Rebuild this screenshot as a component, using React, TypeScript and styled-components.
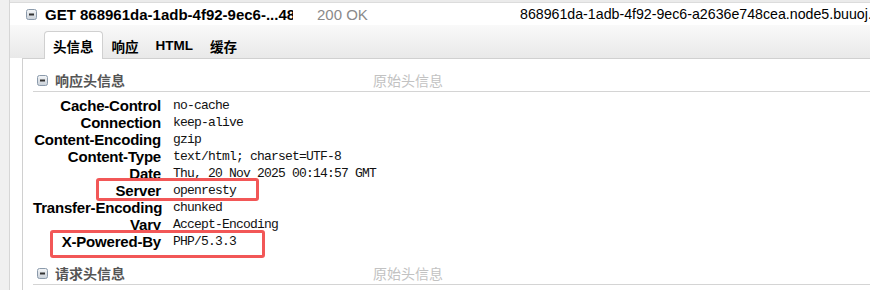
import React from "react";
import styled, { createGlobalStyle } from "styled-components";

const Global = createGlobalStyle`
  html, body { margin: 0; padding: 0; background: #fff; }
  body { width: 870px; height: 290px; overflow: hidden; font-family: "Liberation Sans", Arial, sans-serif; }
`;

const Page = styled.div`
  display: flex;
  width: 870px;
  height: 290px;
  overflow: hidden;
  background: #fff;
`;

const LeftStrip = styled.div`
  width: 9px;
  flex: none;
  background: #f0f0f0;
  border-right: 1px solid #d6d6d6;
`;

const Main = styled.div`
  flex: 1;
  min-width: 0;
  display: flex;
  flex-direction: column;
`;

const TopEdge = styled.div`
  height: 3px;
  background: #ebebeb;
  border-bottom: 1px solid #dcdcdc;
  box-sizing: border-box;
`;

const RequestRow = styled.div`
  height: 22px;
  display: flex;
  align-items: center;
  background: #fff;
  white-space: nowrap;
`;

const ToggleCell = styled.div`
  width: 35px;
  flex: none;
  display: flex;
  justify-content: flex-end;
  padding-right: 8px;
  box-sizing: border-box;
`;

const UrlCell = styled.div`
  width: 248px;
  flex: none;
  overflow: hidden;
  font-weight: bold;
  font-size: 15px;
  color: #000;
`;

const StatusCell = styled.div`
  width: 227px;
  flex: none;
  padding-left: 24px;
  box-sizing: border-box;
  font-size: 15px;
  color: #8a8a8a;
`;

const HostCell = styled.div`
  flex: 1;
  min-width: 0;
  overflow: hidden;
  font-size: 14.2px;
  color: #000;
`;

const TabBar = styled.div`
  height: 33px;
  display: flex;
  align-items: flex-end;
  padding-left: 34px;
  background: linear-gradient(#f9f9f9, #e9e9e9);
  position: relative;
`;

const Tab = styled.div<{ $active?: boolean }>`
  height: 28px;
  display: flex;
  align-items: center;
  padding: 0 ${(p) => (p.$active ? "8px" : "7px")};
  font-weight: bold;
  font-size: 13.5px;
  color: #000;
  font-family: "Liberation Sans", "Noto Sans CJK SC", sans-serif;
  box-sizing: border-box;
  background: ${(p) => (p.$active ? "#fff" : "transparent")};
  border: 1px solid ${(p) => (p.$active ? "#d0d0d0" : "transparent")};
  border-bottom: none;
  border-radius: 4px 4px 0 0;
  margin-bottom: -1px;
  margin-right: 1px;
  position: relative;
  z-index: 1;
`;

const Panel = styled.div`
  margin-left: 12px;
  border-left: 1px solid #d0d0d0;
  border-top: 1px solid #d0d0d0;
  padding: 10px 0 0 10px;
  flex: 1;
`;

const SectionHeader = styled.div<{ $gap?: number }>`
  height: 22px;
  display: flex;
  align-items: center;
  border-bottom: 1px solid #d4d4d4;
  margin-top: ${(p) => p.$gap ?? 0}px;
`;

const SectionTitle = styled.div`
  width: 336px;
  flex: none;
  display: flex;
  align-items: center;
  gap: 7px;
  padding-left: 4px;
  box-sizing: border-box;
  font-weight: bold;
  font-size: 14px;
  color: #555;
  font-family: "Noto Sans CJK SC", sans-serif;
`;

const RawLink = styled.div`
  padding-left: 4px;
  font-size: 14px;
  color: #c2c2c2;
  font-family: "Noto Sans CJK SC", sans-serif;
`;

const Rows = styled.div`
  position: relative;
  margin-top: 5px;
`;

const Row = styled.div`
  display: grid;
  grid-template-columns: 128px 1fr;
  column-gap: 12px;
  height: 17px;
  align-items: center;
`;

const Label = styled.div`
  text-align: right;
  font-weight: bold;
  font-size: 15px;
  letter-spacing: -0.2px;
  color: #000;
  white-space: nowrap;
`;

const Value = styled.div`
  font-family: "Liberation Mono", "Courier New", monospace;
  font-size: 13px;
  letter-spacing: -0.8px;
  color: #111;
  white-space: nowrap;
`;

const Mark = styled.div<{ $l: number; $t: number; $w: number; $h: number }>`
  position: absolute;
  left: ${(p) => p.$l}px;
  top: ${(p) => p.$t}px;
  width: ${(p) => p.$w}px;
  height: ${(p) => p.$h}px;
  border: 3px solid #f25757;
  border-radius: 3px;
  box-sizing: border-box;
  pointer-events: none;
`;

const MinusIcon = () => (
  <svg width="11" height="11" viewBox="0 0 11 11">
    <defs>
      <linearGradient id="mg" x1="0" y1="0" x2="0" y2="1">
        <stop offset="0" stopColor="#f4f6f8" />
        <stop offset="1" stopColor="#c9d0d8" />
      </linearGradient>
    </defs>
    <rect x="0.5" y="0.5" width="10" height="10" rx="2" fill="url(#mg)" stroke="#8b9aab" />
    <rect x="3" y="4.5" width="5" height="2" fill="#333" />
  </svg>
);

const headers: [string, string][] = [
  ["Cache-Control", "no-cache"],
  ["Connection", "keep-alive"],
  ["Content-Encoding", "gzip"],
  ["Content-Type", "text/html; charset=UTF-8"],
  ["Date", "Thu, 20 Nov 2025 00:14:57 GMT"],
  ["Server", "openresty"],
  ["Transfer-Encoding", "chunked"],
  ["Vary", "Accept-Encoding"],
  ["X-Powered-By", "PHP/5.3.3"],
];

export default function App() {
  return (
    <>
      <Global />
      <Page>
        <LeftStrip />
        <Main>
          <TopEdge />
          <RequestRow>
            <ToggleCell>
              <MinusIcon />
            </ToggleCell>
            <UrlCell>GET 868961da-1adb-4f92-9ec6-...48cea.node5</UrlCell>
            <StatusCell>200 OK</StatusCell>
            <HostCell>868961da-1adb-4f92-9ec6-a2636e748cea.node5.buuoj.cn:81</HostCell>
          </RequestRow>
          <TabBar>
            <Tab $active>头信息</Tab>
            <Tab>响应</Tab>
            <Tab>HTML</Tab>
            <Tab>缓存</Tab>
          </TabBar>
          <Panel>
            <SectionHeader>
              <SectionTitle>
                <MinusIcon />
                响应头信息
              </SectionTitle>
              <RawLink>原始头信息</RawLink>
            </SectionHeader>
            <Rows>
              {headers.map(([k, v]) => (
                <Row key={k}>
                  <Label>{k}</Label>
                  <Value>{v}</Value>
                </Row>
              ))}
              <Mark $l={63} $t={81} $w={163} $h={23} />
              <Mark $l={17} $t={133} $w={215} $h={28} />
            </Rows>
            <SectionHeader $gap={12}>
              <SectionTitle>
                <MinusIcon />
                请求头信息
              </SectionTitle>
              <RawLink>原始头信息</RawLink>
            </SectionHeader>
          </Panel>
        </Main>
      </Page>
    </>
  );
}
